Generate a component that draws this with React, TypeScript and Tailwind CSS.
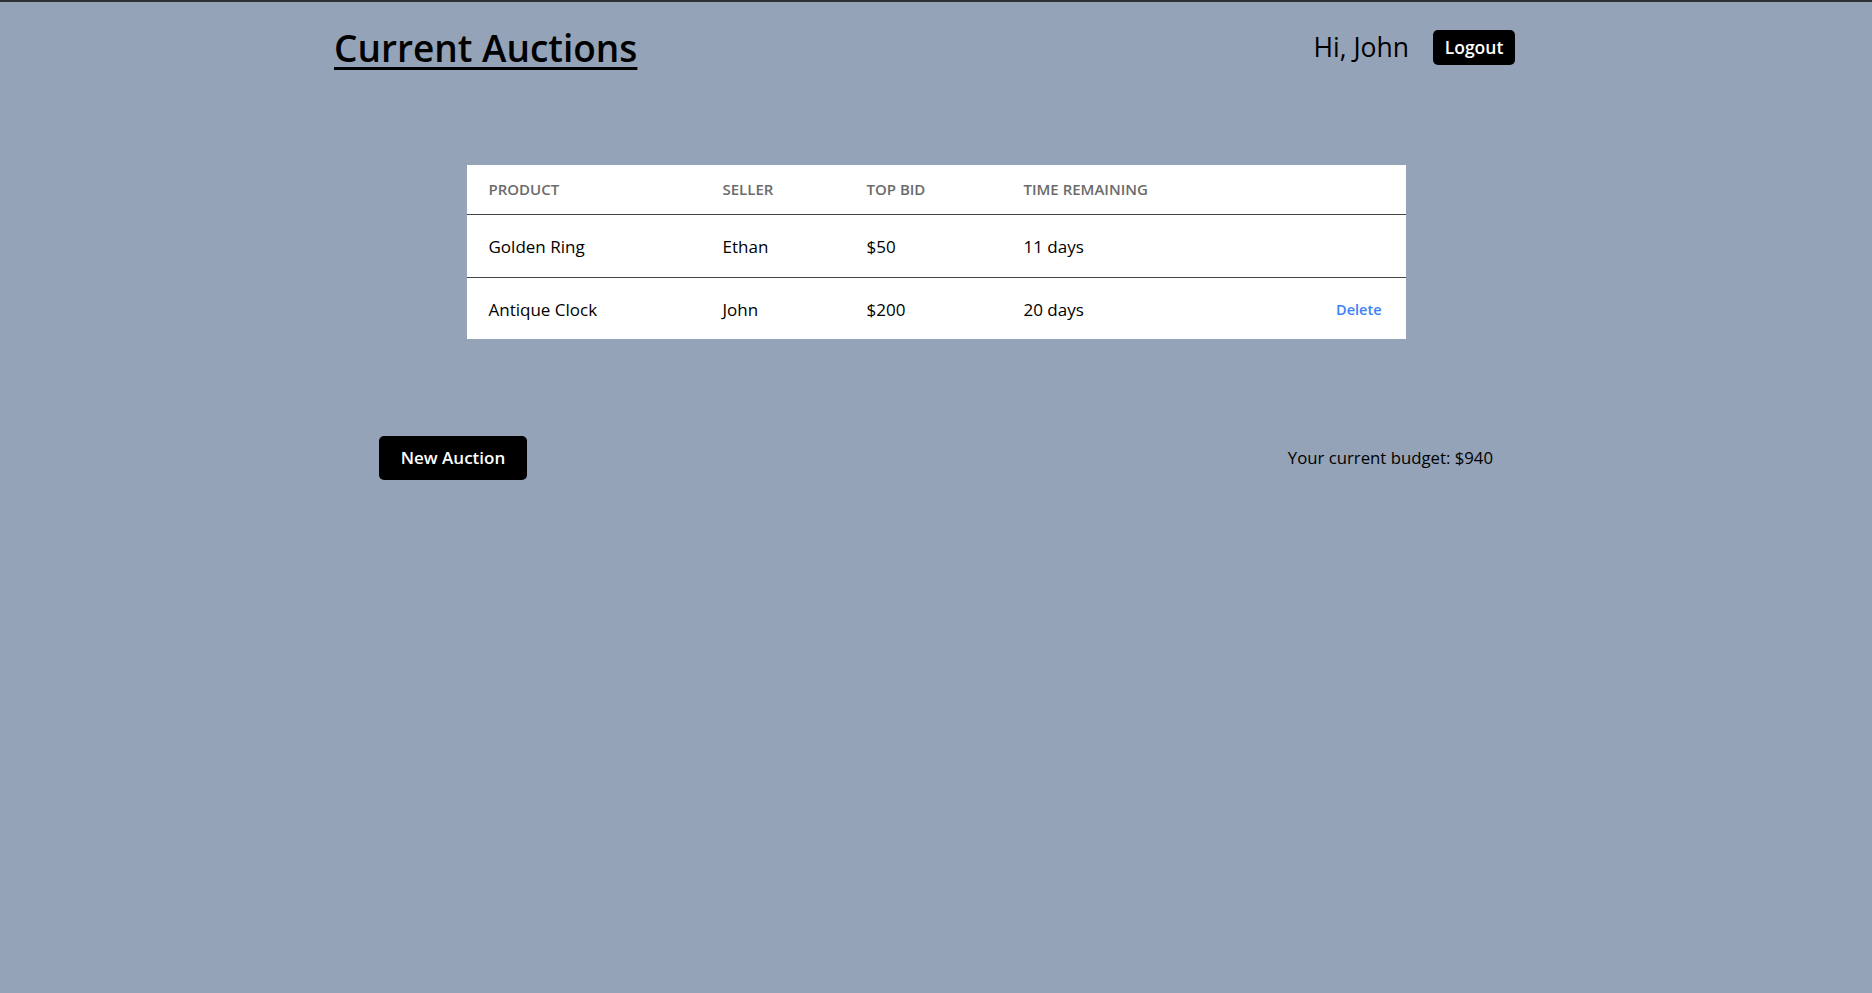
import React from "react";

type Auction = {
  product: string;
  seller: string;
  topBid: string;
  remaining: string;
  mine: boolean;
};

const auctions: Auction[] = [
  { product: "Golden Ring", seller: "Ethan", topBid: "$50", remaining: "11 days", mine: false },
  { product: "Antique Clock", seller: "John", topBid: "$200", remaining: "20 days", mine: true },
];

const App: React.FC = () => {
  return (
    <div className="min-h-screen border-t-2 border-[#2e3035] bg-[#94a3b8] font-['Open_Sans',sans-serif] text-black">
      <header className="ml-[334px] flex h-[90px] w-[1181px] items-center justify-between">
        <h1 className="text-[37px] font-semibold leading-none underline decoration-[3px] underline-offset-[5px]">
          Current Auctions
        </h1>
        <div className="flex items-center gap-[24px]">
          <span className="text-[26.5px] leading-none">Hi, John</span>
          <button className="h-[35px] w-[82px] rounded-[5px] bg-black text-[17.5px] font-semibold text-white">
            Logout
          </button>
        </div>
      </header>

      <div className="mx-auto mt-[73px] w-[939px] bg-white">
        <table className="w-full table-fixed border-collapse">
          <colgroup>
            <col className="w-[234px]" />
            <col className="w-[144px]" />
            <col className="w-[157px]" />
            <col className="w-[250px]" />
            <col />
          </colgroup>
          <thead>
            <tr className="h-[49px] border-b border-[#454545]">
              <th className="px-[22px] text-left text-[15px] font-semibold uppercase text-[#6b6b6b]">Product</th>
              <th className="px-[22px] text-left text-[15px] font-semibold uppercase text-[#6b6b6b]">Seller</th>
              <th className="px-[22px] text-left text-[15px] font-semibold uppercase text-[#6b6b6b]">Top Bid</th>
              <th className="px-[22px] text-left text-[15px] font-semibold uppercase text-[#6b6b6b]">Time Remaining</th>
              <th className="px-6" />
            </tr>
          </thead>
          <tbody>
            {auctions.map((a, i) => (
              <tr key={a.product} className={i < auctions.length - 1 ? "h-[63px] border-b border-[#454545]" : "h-[62px]"}>
                <td className="px-[22px] pt-[2px] text-[17px]">{a.product}</td>
                <td className="px-[22px] pt-[2px] text-[17px]">{a.seller}</td>
                <td className="px-[22px] pt-[2px] text-[17px]">{a.topBid}</td>
                <td className="px-[22px] pt-[2px] text-[17px]">{a.remaining}</td>
                <td className="px-6 pt-[2px] text-right">
                  {a.mine && (
                    <button className="text-[14.5px] font-semibold text-[#3b82f6]">Delete</button>
                  )}
                </td>
              </tr>
            ))}
          </tbody>
        </table>
      </div>

      <div className="mx-auto mt-[97px] flex w-[1114px] items-center justify-between">
        <button className="h-[44px] w-[148px] rounded-[5px] bg-black text-[17px] font-semibold text-white">
          New Auction
        </button>
        <span className="text-[16.75px]">Your current budget: $940</span>
      </div>
    </div>
  );
};

export default App;
